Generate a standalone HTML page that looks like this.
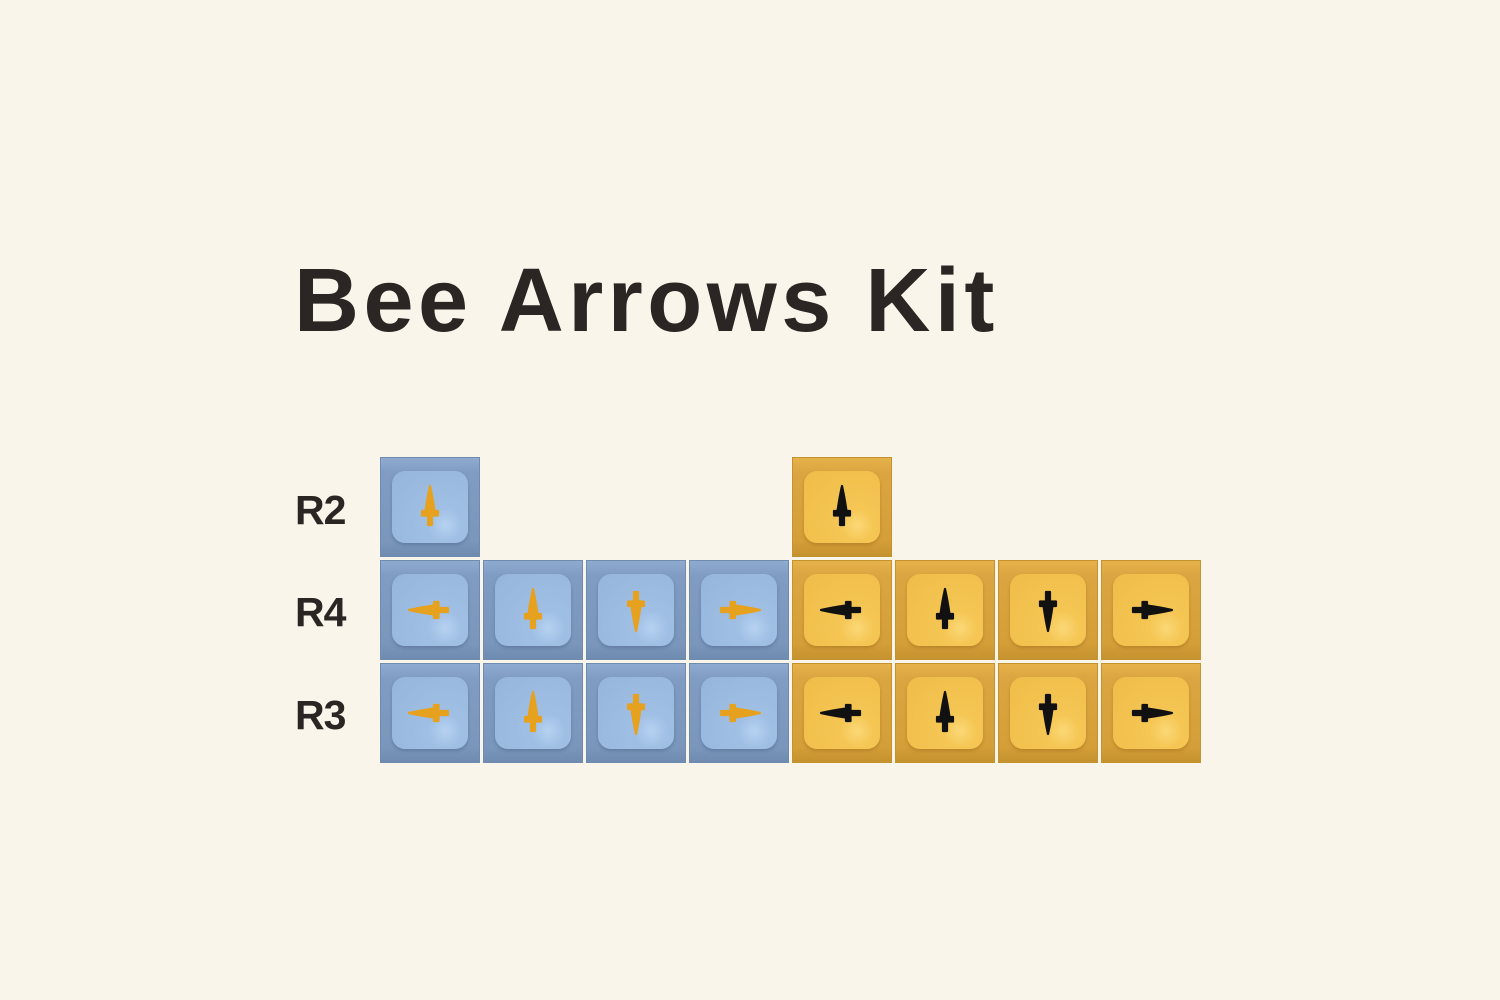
<!DOCTYPE html>
<html><head><style>
body{margin:0;width:1500px;height:1000px;background:#f9f5ea;position:relative;overflow:hidden;font-family:"Liberation Sans",sans-serif}
.t{position:absolute;left:294px;top:250px;font-size:90px;font-weight:bold;color:#2b2523;letter-spacing:4.5px;white-space:nowrap}
.l{position:absolute;left:295px;font-size:41px;font-weight:bold;color:#2b2523;letter-spacing:-1px}
.k{position:absolute;width:100px;height:100px;box-sizing:border-box}
.b{background:linear-gradient(180deg,#8fabd0 0,#809cc2 15%,#7a96bb 85%,#6f8bb0 100%);border:1px solid #6f8bb0}
.y{background:linear-gradient(180deg,#e6b24a 0,#dba541 15%,#d49e38 85%,#c4922f 100%);border:1px solid #c4922f}
.k .s{position:absolute;left:11px;top:13px;width:76px;height:72px;border-radius:13px}
.b .s{background:radial-gradient(circle at 70% 75%,#b6d2f2 0,#a0bfe4 22%,#96b5db 100%);box-shadow:0 2px 3px rgba(60,80,120,.35)}
.y .s{background:radial-gradient(circle at 70% 75%,#fbd877 0,#f5c654 22%,#efbc48 100%);box-shadow:0 2px 3px rgba(140,90,20,.35)}
.k svg{position:absolute;left:24px;top:24px;width:50px;height:50px}
</style></head><body>
<div class="t">Bee Arrows Kit</div>
<div class="l" style="top:487px">R2</div>
<div class="l" style="top:589px">R4</div>
<div class="l" style="top:692px">R3</div>
<svg width="0" height="0" style="position:absolute"><defs>
<path id="d" d="M0,-21 Q2.5,-10 4.5,4 L8,4 L8,8.5 L2,8.5 L2,18 L-2,18 L-2,8.5 L-8,8.5 L-8,4 L-4.5,4 Q-2.5,-10 0,-21 Z" stroke-linejoin="round" stroke-width="2.2"/>
</defs></svg>
<div id="g"></div>
<script>
var cols=[380,483,586,689,792,895,998,1101],rows=[457,560,663];
var rot=[-90,0,180,90];
function key(x,y,c,r){
 var col=c=='b'?'#e6a11e':'#111';
 return '<div class="k '+c+'" style="left:'+x+'px;top:'+y+'px"><div class="s"></div><svg viewBox="-25 -25 50 50"><use href="#d" fill="'+col+'" stroke="'+col+'" transform="rotate('+r+')"/></svg></div>';
}
var h=key(380,457,'b',0)+key(792,457,'y',0);
for(var ri=1;ri<3;ri++)for(var i=0;i<8;i++)h+=key(cols[i],rows[ri],i<4?'b':'y',rot[i%4]);
document.getElementById('g').innerHTML=h;
</script>
</body></html>
